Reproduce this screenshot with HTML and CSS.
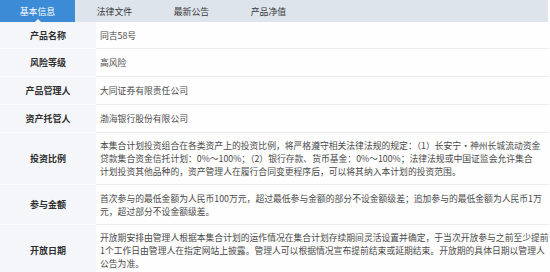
FILE: index.html
```html
<!DOCTYPE html>
<html lang="zh-CN">
<head>
<meta charset="utf-8">
<link rel="stylesheet" href="styles.css">
</head>
<body>
<div class="panel">
  <div class="tabs">
    <div class="tab active">基本信息</div>
    <div class="tab">法律文件</div>
    <div class="tab">最新公告</div>
    <div class="tab">产品净值</div>
  </div>
  <div class="table">
    <div class="label r1">产品名称</div>
    <div class="value r1">同吉58号</div>
    <div class="label">风险等级</div>
    <div class="value">高风险</div>
    <div class="label">产品管理人</div>
    <div class="value">大同证券有限责任公司</div>
    <div class="label">资产托管人</div>
    <div class="value">渤海银行股份有限公司</div>
    <div class="label multi">投资比例</div>
    <div class="value multi">本集合计划投资组合在各类资产上的投资比例，将严格遵守相关法律法规的规定：（1）长安宁·神州长城流动资金<br>贷款集合资金信托计划：0%～100%；（2）银行存款、货币基金：0%～100%；法律法规或中国证监会允许集合<br>计划投资其他品种的，资产管理人在履行合同变更程序后，可以将其纳入本计划的投资范围。</div>
    <div class="label multi">参与金额</div>
    <div class="value multi">首次参与的最低金额为人民币100万元，超过最低参与金额的部分不设金额级差；追加参与的最低金额为人民币1万<br>元，超过部分不设金额级差。</div>
    <div class="label multi">开放日期</div>
    <div class="value multi">开放期安排由管理人根据本集合计划的运作情况在集合计划存续期间灵活设置并确定，于当次开放参与之前至少提前<br>1个工作日由管理人在指定网站上披露。管理人可以根据情况宣布提前结束或延期结束。开放期的具体日期以管理人<br>公告为准。</div>
  </div>
</div>
</body>
</html>
```
FILE: styles.css
```css
html, body {
  margin: 0;
  padding: 0;
  background: #ffffff;
}
body {
  font-family: "Noto Sans CJK SC", "Noto Sans", sans-serif;
  font-size: 8.8px;
  color: #4a4a4a;
}
.panel {
  width: 548px;
  border-right: 1px solid #e2e5e9;
  box-sizing: border-box;
}
.tabs {
  display: flex;
  gap: 2px;
  height: 22px;
  background: #dde4eb;
}
.tab {
  position: relative;
  width: 75px;
  display: flex;
  align-items: center;
  justify-content: center;
  color: #3a3a3a;
  font-size: 8.9px;
}
.tab.active {
  background: #3c8bd6;
  color: #ffffff;
}
.tab.active::after {
  content: "";
  position: absolute;
  left: 50%;
  bottom: 0;
  margin-left: -3px;
  border-left: 3px solid transparent;
  border-right: 3px solid transparent;
  border-bottom: 3px solid #f4f6f9;
}
.table {
  display: grid;
  grid-template-columns: 96px 1fr;
}
.label, .value {
  display: flex;
  align-items: center;
  min-height: 27px;
  line-height: 13px;
}
.label {
  justify-content: center;
  background: #f4f6f9;
  font-weight: bold;
  font-size: 9px;
  color: #2e2e2e;
  border-bottom: 1px solid #fbfcfd;
}
.value {
  background: #fefefe;
  padding-left: 4px;
  white-space: nowrap;
  border-bottom: 1px solid #ececec;
}
.r1 {
  min-height: 26px;
}
.multi {
  padding-top: 6px;
  padding-bottom: 6px;
}
```
